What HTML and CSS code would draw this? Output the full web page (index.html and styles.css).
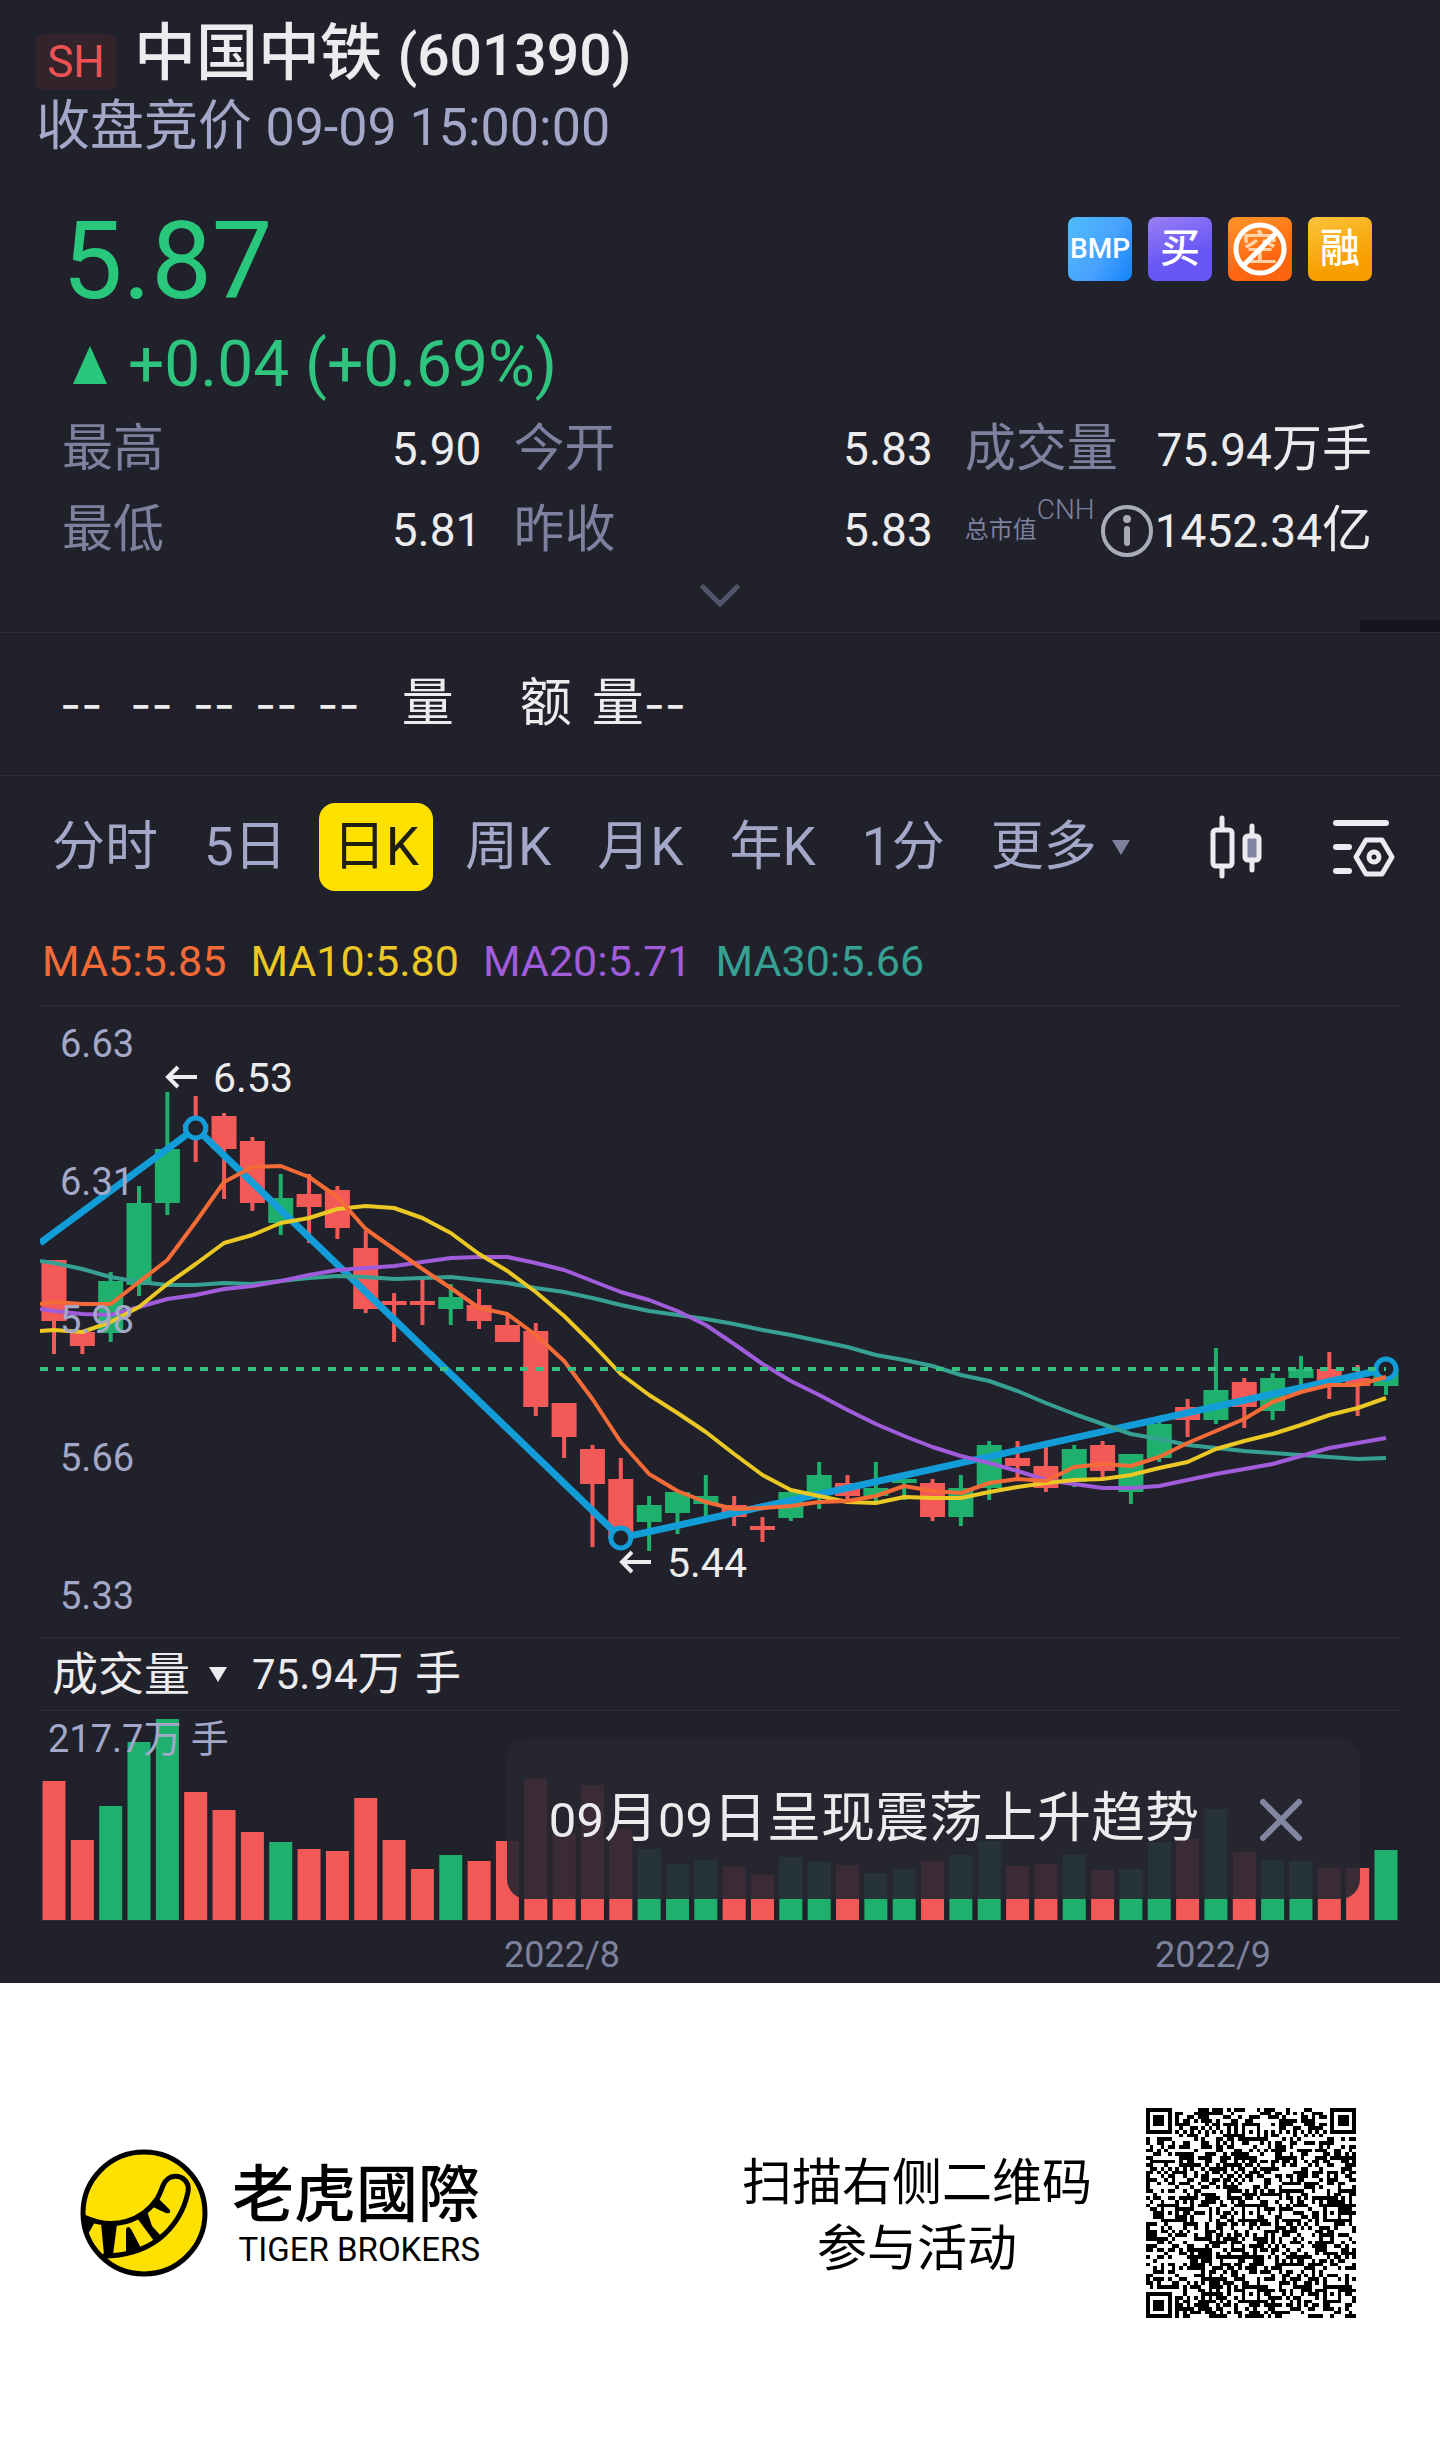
FILE: index.html
```html
<!DOCTYPE html>
<html lang="zh-CN">
<head>
<meta charset="utf-8">
<meta name="viewport" content="width=device-width, initial-scale=1">
<title>中国中铁 (601390)</title>
<link rel="stylesheet" href="styles.css">
</head>
<body>
<main class="quote">
  <header class="head">
    <div class="head-title">
      <span class="market">SH</span>
      <h1 class="name">中国中铁 <span class="code">(601390)</span></h1>
    </div>
    <p class="session">收盘竞价 <span class="session-time">09-09 15:00:00</span></p>
  </header>

  <section class="summary">
    <div class="summary-top">
      <div>
        <p class="price">5.87</p>
        <p class="change">
          <svg class="change-arrow" viewBox="0 0 34 38" aria-hidden="true"><path d="M17 0 34 38H0z"/></svg>
          <span>+0.04 (+0.69%)</span>
        </p>
      </div>
      <ul class="tags">
        <li class="tag tag-bmp">BMP</li>
        <li class="tag tag-buy">买</li>
        <li class="tag tag-short">空
          <svg class="tag-ban" viewBox="0 0 64 64" aria-hidden="true"><circle cx="32" cy="32" r="24"/><path d="M15 49 49 15"/></svg>
        </li>
        <li class="tag tag-margin">融</li>
      </ul>
    </div>
    <dl class="stats">
      <div class="stat"><dt>最高</dt><dd>5.90</dd></div>
      <div class="stat"><dt>今开</dt><dd>5.83</dd></div>
      <div class="stat"><dt>成交量</dt><dd>75.94<span class="unit">万手</span></dd></div>
      <div class="stat"><dt>最低</dt><dd>5.81</dd></div>
      <div class="stat"><dt>昨收</dt><dd>5.83</dd></div>
      <div class="stat">
        <dt class="cap">总市值<sup class="currency">CNH</sup></dt>
        <dd class="cap-value">
          <svg class="info" viewBox="0 0 52 52" aria-hidden="true"><circle cx="26" cy="26" r="24" fill="none" stroke="currentColor" stroke-width="4"/><circle cx="26" cy="14" r="4" fill="currentColor"/><path d="M26 24v14" stroke="currentColor" stroke-width="6" stroke-linecap="round"/></svg>
          <span>1452.34<span class="unit">亿</span></span>
        </dd>
      </div>
    </dl>
    <button class="expand" type="button" aria-label="展开">
      <svg class="expand-icon" viewBox="0 0 40 24" aria-hidden="true"><path d="m3 3 17 17L37 3"/></svg>
    </button>
  </section>

  <section class="orders">
    <span class="dash dash-first">--</span>
    <span class="dash">--</span>
    <span class="dash">--</span>
    <span class="dash">--</span>
    <span class="dash">--</span>
    <span class="order-volume">量</span>
    <span>额</span>
    <span>量<span class="dash">--</span></span>
  </section>

  <nav class="periods">
    <div class="tabs">
      <button class="tab" type="button">分时</button>
      <button class="tab" type="button">5日</button>
      <button class="tab tab-active" type="button">日K</button>
      <button class="tab" type="button">周K</button>
      <button class="tab" type="button">月K</button>
      <button class="tab" type="button">年K</button>
      <button class="tab" type="button">1分</button>
      <button class="tab tab-more" type="button">更多<svg class="caret" viewBox="0 0 20 15" aria-hidden="true"><path d="M1 0h18L10 15z"/></svg></button>
    </div>
    <div class="tools">
      <button class="tool" type="button" aria-label="K线样式">
        <svg width="56" height="64" viewBox="0 0 56 64" aria-hidden="true" fill="none" stroke="#ececf0" stroke-width="5" stroke-linecap="round"><rect x="3" y="15" width="19" height="36" rx="3"/><path d="M12 3v11M12 52v9M42 11v9M42 46v9"/><rect x="35" y="21" width="14" height="24" rx="3" fill="#8084a2"/></svg>
      </button>
      <button class="tool" type="button" aria-label="图表设置">
        <svg width="64" height="64" viewBox="0 0 64 64" aria-hidden="true" fill="none" stroke="#ececf0" stroke-width="6" stroke-linecap="round" stroke-linejoin="round"><path d="M4 8h50M4 32h13M4 56h13"/><path stroke-width="5" d="M34 25h16l10 17-10 17H34L24 42z"/><circle cx="42" cy="42" r="5" stroke-width="5"/></svg>
      </button>
    </div>
  </nav>

  <section class="chart">
    <ul class="averages">
      <li class="ma5">MA5:5.85</li>
      <li class="ma10">MA10:5.80</li>
      <li class="ma20">MA20:5.71</li>
      <li class="ma30">MA30:5.66</li>
    </ul>
    <svg class="plot" id="prices" viewBox="0 0 1360 631" role="img" aria-label="日K线"></svg>
    <div class="indicator">
      <button class="indicator-name" type="button">成交量<svg class="caret" viewBox="0 0 20 15" aria-hidden="true"><path d="M1 0h18L10 15z"/></svg></button>
      <span><span class="indicator-value">75.94</span>万 手</span>
    </div>
    <div class="volume">
      <svg class="plot" id="volumes" viewBox="0 0 1360 272" role="img" aria-label="成交量"></svg>
      <div class="notice">
        <p class="notice-text"><span class="num">09</span>月<span class="num">09</span>日呈现震荡上升趋势</p>
        <button class="notice-close" type="button" aria-label="关闭">
          <svg width="44" height="44" viewBox="0 0 44 44" aria-hidden="true"><path d="m4 4 36 36M40 4 4 40" stroke="#8186a3" stroke-width="6" stroke-linecap="round"/></svg>
        </button>
      </div>
    </div>
  </section>
</main>

<footer class="promo">
  <div class="brand">
    <svg class="brand-mark" viewBox="0 0 128 128" aria-hidden="true">
      <circle cx="64" cy="64" r="61" fill="#ffe100" stroke="#000" stroke-width="5"/>
      <path fill="none" stroke="#000" stroke-width="5" d="M4 68C34 82 62 72 77 50c6-10 5-18 14-22 10-3 19 4 17 15-4 19-14 35-29 47-16 12-35 17-56 17"/>
      <path d="m3 66 12 7-8 14zM21 74l16 1-4 31h-9zM46 80q2-4 5 0l10 19-15 4zM57 69l10-7 5 15 9 10-7 5zM71 57l8-7 11 11q1 4-4 3l-11-5z"/>
    </svg>
    <div class="brand-text">
      <p class="brand-name">老虎國際</p>
      <p class="brand-latin">TIGER BROKERS</p>
    </div>
  </div>
  <div class="scan">
    <p class="scan-text">扫描右侧二维码<br>参与活动</p>
    <svg class="qr" id="qr" viewBox="0 0 57 57" shape-rendering="crispEdges" role="img" aria-label="二维码"></svg>
  </div>
</footer>
<script src="chart.js"></script>
</body>
</html>
```

FILE: styles.css
```css
* {
  box-sizing: border-box;
}

body {
  margin: 0;
  background: #fff;
  color: #ececee;
  font-family: Roboto, "Noto Sans CJK SC", sans-serif;
}

h1, p, ul, dl, dd {
  margin: 0;
  padding: 0;
}

ul {
  list-style: none;
}

button {
  padding: 0;
  border: 0;
  background: none;
  color: inherit;
  font: inherit;
}

svg {
  display: block;
}

.quote {
  background: #21212b;
}

/* Header */
.head {
  padding: 20px 36px 0;
}

.head-title {
  display: flex;
  align-items: flex-end;
  gap: 18px;
}

.market {
  width: 80px;
  border-radius: 8px;
  background: #33242c;
  color: #ee5253;
  font-size: 44px;
  line-height: 56px;
  text-align: center;
}

.name {
  font-size: 62px;
  font-weight: 500;
  line-height: 68px;
}

.code {
  font-size: 57px;
}

.session {
  margin-top: 4px;
  color: #a3a8c8;
  font-size: 54px;
  line-height: 66px;
}

.session-time {
  font-size: 52px;
}

/* Price summary */
.summary {
  position: relative;
  padding: 44px 68px 0 62px;
  border-bottom: 1px solid #2d2e39;
}

.summary::after {
  content: "";
  position: absolute;
  right: 0;
  bottom: 0;
  width: 80px;
  height: 12px;
  background: #14141d;
}

.summary-top {
  display: flex;
  justify-content: space-between;
}

.price {
  color: #29c77b;
  font-size: 108px;
  line-height: 112px;
}

.change {
  display: flex;
  align-items: center;
  gap: 20px;
  margin: 12px 0 8px 10px;
  color: #2fc57e;
  font-size: 64px;
  line-height: 72px;
}

.change-arrow {
  width: 36px;
  height: 38px;
  fill: #29c77b;
}

.tags {
  display: flex;
  gap: 16px;
  padding-top: 12px;
}

.tag {
  position: relative;
  width: 64px;
  height: 64px;
  border-radius: 8px;
  color: #fff;
  font-size: 40px;
  font-weight: 500;
  line-height: 64px;
  text-align: center;
}

.tag-bmp {
  background: linear-gradient(120deg, #4dbdfb, #49a2fd 55%, #1284fb);
  font-size: 28px;
}

.tag-buy {
  background: linear-gradient(160deg, #9b7ff3, #6857f6 60%);
}

.tag-short {
  background: linear-gradient(160deg, #fd9528, #fd6410 70%);
  color: #ffd3a8;
  font-size: 36px;
}

.tag-margin {
  background: linear-gradient(160deg, #fac43c, #f79f00 70%);
}

.tag-ban {
  position: absolute;
  inset: 0;
  fill: none;
  stroke: #fff;
  stroke-width: 5;
}

.stats {
  display: grid;
  grid-template-columns: 1.03fr 1.03fr 1fr;
  column-gap: 32px;
}

.stat {
  display: flex;
  justify-content: space-between;
  font-size: 46px;
  line-height: 80px;
  white-space: nowrap;
}

.stat dt {
  color: #7d819e;
  font-size: 51px;
}

.unit {
  font-size: 50px;
}

.stat .cap {
  font-size: 24px;
}

.currency {
  position: relative;
  top: -10px;
  font-size: 28px;
  font-weight: 300;
  line-height: 0;
}

.cap-value {
  display: flex;
  align-items: center;
  gap: 2px;
}

.info {
  width: 52px;
  height: 52px;
  color: #a9abba;
}

.expand {
  display: block;
  margin: 0 auto;
  padding: 13px 20px 24px 26px;
}

.expand-icon {
  width: 40px;
  height: 24px;
  fill: none;
  stroke: #515466;
  stroke-width: 5;
  stroke-linecap: round;
}

/* Order row */
.orders {
  display: flex;
  align-items: center;
  gap: 20px;
  padding: 38px 60px;
  border-bottom: 1px solid #2d2e39;
  font-size: 52px;
  line-height: 66px;
}

.dash {
  font-family: Inter, sans-serif;
  font-size: 46px;
}

.dash-first {
  margin-right: 8px;
}

.order-volume {
  margin: 0 46px 0 22px;
}

/* Period tabs */
.periods {
  display: flex;
  align-items: center;
  justify-content: space-between;
  padding: 27px 44px 40px 38px;
}

.tabs {
  display: flex;
  gap: 18px;
}

.tab {
  padding: 0 14px;
  border-radius: 16px;
  color: #a3a8c8;
  font-size: 53px;
  line-height: 88px;
}

.tab-active {
  background: #ffe100;
  color: #1f1e12;
}

.tab-more {
  display: flex;
  align-items: center;
  gap: 14px;
}

.caret {
  width: 20px;
  height: 15px;
  fill: currentColor;
}

.tab-more .caret {
  fill: #7d819e;
}

.tools {
  display: flex;
  gap: 66px;
}

/* Chart */
.chart {
  padding: 0 40px;
}

.averages {
  display: flex;
  gap: 24px;
  padding: 0 2px 14px;
  border-bottom: 1px solid #2d2e39;
  font-size: 43px;
  line-height: 60px;
}

.ma5 { color: #f56b38; }
.ma10 { color: #ecc824; }
.ma20 { color: #a05cda; }
.ma30 { color: #36a193; }

.plot {
  width: 100%;
  height: auto;
}

.up { fill: #20b06d; }
.down { fill: #f35957; }

.line {
  fill: none;
  stroke: currentColor;
  stroke-width: 4;
  stroke-linejoin: round;
}

.trend {
  fill: none;
  stroke: #129dd8;
  stroke-width: 7;
}

.pivot {
  fill: #21212b;
  stroke: #129dd8;
  stroke-width: 5;
}

.last-price {
  stroke: #37c083;
  stroke-width: 4;
  stroke-dasharray: 8 8;
}

.axis {
  fill: #a3a8c8;
  font-size: 38px;
}

.date {
  fill: #7d819e;
  font-size: 36px;
  text-anchor: middle;
}

.mark {
  fill: #ececee;
  font-size: 41px;
}

.mark-arrow {
  fill: none;
  stroke: #ececee;
  stroke-width: 4;
}

.base {
  stroke: #2d2e39;
}

.indicator {
  display: flex;
  align-items: center;
  gap: 24px;
  padding-left: 12px;
  border: solid #2d2e39;
  border-width: 1px 0;
  font-size: 46px;
  line-height: 71px;
}

.indicator-name {
  display: flex;
  align-items: center;
  gap: 18px;
}

.indicator-value {
  font-size: 42px;
}

.volume {
  position: relative;
}

.notice {
  position: absolute;
  top: 28px;
  right: 40px;
  display: flex;
  align-items: center;
  gap: 60px;
  height: 160px;
  padding: 2px 57px 0 42px;
  border-radius: 20px;
  background: rgba(39, 39, 50, .905);
}

.notice-text {
  font-size: 54px;
  line-height: 72px;
  white-space: nowrap;
}

.num {
  font-size: 49px;
}

/* Footer */
.promo {
  display: flex;
  align-items: center;
  justify-content: space-between;
  padding: 125px 84px 124px 80px;
  color: #000;
}

.brand {
  display: flex;
  align-items: center;
  gap: 24px;
}

.brand-mark {
  width: 128px;
  height: 128px;
}

.brand-text {
  text-align: right;
}

.brand-name {
  font-family: "Noto Sans CJK TC", sans-serif;
  font-size: 62px;
  font-weight: 500;
  line-height: 64px;
}

.brand-latin {
  margin-top: 10px;
  font-size: 33px;
  line-height: 36px;
}

.scan {
  display: flex;
  align-items: center;
  gap: 54px;
}

.scan-text {
  padding-top: 6px;
  font-size: 50px;
  line-height: 66px;
  text-align: center;
}

.qr {
  width: 210px;
  height: 210px;
}
```

FILE: chart.js
```js
const NS = "http://www.w3.org/2000/svg";
const STEP = 28.34;
const FIRST = 14;

function add(parent, tag, attrs, text) {
  const el = document.createElementNS(NS, tag);
  for (const key in attrs) el.setAttribute(key, attrs[key]);
  if (text) el.textContent = text;
  parent.appendChild(el);
}

const at = i => FIRST + STEP * i;

// One row a day: rising, high, body top, body bottom, low, volume height
const days = [
  [0,254,254,315,348,139],[0,326,326,340,348,80],[1,266,275,327,336,114],[1,180,197,279,290,178],
  [1,86,143,197,209,201],[0,90,118,126,156,128],[0,107,110,143,193,110],[0,131,135,197,205,88],
  [1,168,192,217,229,78],[0,168,188,201,237,71],[0,180,184,222,233,69],[0,225,242,303,307,122],
  [0,287,295,299,336,80],[0,274,295,299,319,51],[1,278,291,303,319,65],[0,283,299,315,323,59],
  [0,308,319,336,336,79],[0,317,325,401,410,141],[0,397,397,431,452,87],[0,439,443,478,541,135],
  [0,452,473,532,532,91],[1,490,499,516,545,71],[1,486,486,507,528,56],[1,469,490,498,511,60],
  [0,490,499,511,520,53],[0,511,520,524,536,45],[1,483,486,512,515,63],[1,456,469,486,503,58],
  [0,469,477,490,498,55],[1,456,482,490,496,47],[1,473,473,477,494,51],[0,473,477,511,515,59],
  [1,469,482,511,520,65],[1,435,439,482,494,79],[0,435,452,460,475,54],[0,440,460,482,486,56],
  [1,439,443,476,481,65],[0,435,439,465,473,50],[1,448,448,486,498,51],[1,410,418,452,456,78],
  [0,393,401,414,431,81],[1,342,384,414,418,111],[0,372,376,401,422,68],[1,367,372,405,414,60],
  [1,350,363,372,380,59],[0,346,363,376,393,52],[0,359,372,380,410,52],[1,363,363,380,389,70]
];

// The first value of each average is its height at the left edge
const averages = {
  ma30: [255,257,263,271,276,279,279,277,278,275,272,270,271,273,272,271,274,277,282,286,292,299,305,309,313,318,324,329,335,341,349,354,360,369,375,385,397,408,418,428,433,439,442,445,447,449,451,453,452],
  ma20: [303,305,308,309,301,293,289,283,280,275,269,264,262,260,256,252,251,251,257,264,275,286,294,305,319,338,358,375,389,404,418,430,441,450,457,465,474,478,482,482,480,474,468,463,458,450,442,437,432],
  ma10: [325,324,326,316,301,278,258,237,229,217,212,203,200,202,212,227,248,265,286,310,338,368,389,407,426,448,469,484,490,496,497,491,492,492,486,481,477,474,473,469,462,456,443,435,428,419,409,402,392],
  ma5: [298,296,298,298,276,254,216,176,161,160,171,191,223,243,263,282,302,308,329,355,393,436,468,485,496,503,502,500,496,495,490,480,485,487,477,473,475,461,458,460,451,437,425,413,396,386,379,379,371]
};

const prices = document.getElementById("prices");
days.forEach(([up, high, top, bottom, low], i) => {
  const cls = up ? "up" : "down";
  add(prices, "rect", { class: cls, x: at(i) - 2, y: high, width: 4, height: low - high });
  add(prices, "rect", { class: cls, x: at(i) - 12.5, y: top, width: 25, height: bottom - top });
});

const pivots = [[at(5), 122], [at(20), 532], [at(47), 363]];
add(prices, "polyline", { class: "trend", points: [[0, 237], ...pivots].join(" ") });
pivots.forEach(([cx, cy]) => add(prices, "circle", { class: "pivot", cx, cy, r: 10 }));

for (const name in averages) {
  const points = averages[name].map((y, i) => [i ? at(i - 1) : 0, y]);
  add(prices, "polyline", { class: "line " + name, points: points.join(" ") });
}
add(prices, "line", { class: "last-price", x1: 0, x2: 1346, y1: 363, y2: 363 });

["6.63", "6.31", "5.98", "5.66", "5.33"].forEach((label, i) =>
  add(prices, "text", { class: "axis", x: 20, y: 51 + 138 * i }, label));
[["6.53", 126, 86], ["5.44", 580, 571]].forEach(([label, x, y]) => {
  add(prices, "path", { class: "mark-arrow", d: `M${x + 31} ${y - 15}H${x + 2}m10-10-10 10 10 10` });
  add(prices, "text", { class: "mark", x: x + 47, y }, label);
});

const volumes = document.getElementById("volumes");
const BASE = 209;
days.forEach(([up, , , , , height], i) =>
  add(volumes, "rect", { class: up ? "up" : "down", x: at(i) - 11.5, y: BASE - height, width: 23, height }));
add(volumes, "line", { class: "base", x1: 0, x2: 1360, y1: BASE + .5, y2: BASE + .5 });
add(volumes, "text", { class: "axis", x: 8, y: 41 }, "217.7万 手");
add(volumes, "text", { class: "date", x: 522, y: 256 }, "2022/8");
add(volumes, "text", { class: "date", x: 1173, y: 256 }, "2022/9");

// QR code grid: finders, alignment marks and timing rows round the data modules
const SIZE = 57;
const ring = (x, y, cx, cy) => Math.max(Math.abs(x - cx), Math.abs(y - cy));
let seed = 601390;
function dataBit() {
  seed = (seed * 1103515245 + 12345) % 2147483648;
  return seed / 2147483648 < .5;
}
function isDark(x, y) {
  const bit = dataBit();
  for (const [cx, cy] of [[3, 3], [53, 3], [3, 53]]) {
    const d = ring(x, y, cx, cy);
    if (d <= 4) return d < 2 || d === 3;
  }
  for (const cx of [6, 28, 50]) for (const cy of [6, 28, 50]) {
    if ((cx === 6 && cy !== 28) || (cy === 6 && cx !== 28)) continue;
    const d = ring(x, y, cx, cy);
    if (d <= 2) return d !== 1;
  }
  if (x === 6 || y === 6) return (x + y) % 2 === 0;
  return bit;
}
let modules = "";
for (let y = 0; y < SIZE; y++)
  for (let x = 0; x < SIZE; x++)
    if (isDark(x, y)) modules += `M${x} ${y}h1v1h-1z`;
add(document.getElementById("qr"), "path", { d: modules });
```
